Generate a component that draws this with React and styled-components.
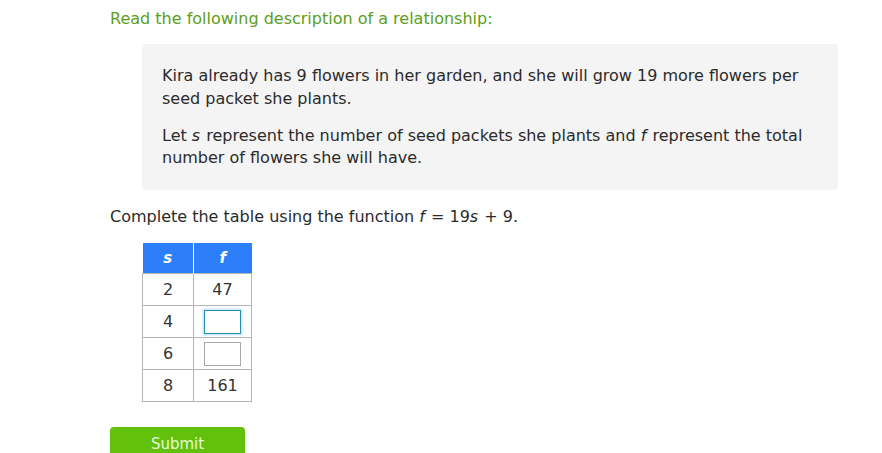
import React from "react";
import styled, { createGlobalStyle } from "styled-components";

const Global = createGlobalStyle`
  html, body { margin: 0; padding: 0; background: #fff; }
  body { font-family: "DejaVu Sans", Verdana, sans-serif; color: #333; }
`;

const Page = styled.div`
  padding: 7px 0 0 110px;
  width: 882px;
  height: 453px;
  box-sizing: border-box;
  overflow: hidden;
`;

const Heading = styled.div`
  font-size: 16px;
  line-height: 23px;
  color: #5b9e1c;
`;

const DescBox = styled.div`
  margin: 14px 0 0 32px;
  width: 696px;
  box-sizing: border-box;
  background: #f4f4f4;
  border-radius: 4px;
  padding: 21px 20px 20px 20px;
`;

const Para = styled.p`
  margin: 0;
  font-size: 16px;
  line-height: 22.5px;
  color: #2b2b2b;
  & + & { margin-top: 14.5px; }
`;

const Var = styled.i`
  padding-right: 1px;
`;

const Prompt = styled.div`
  margin-top: 15px;
  font-size: 16px;
  line-height: 23px;
  color: #2b2b2b;
`;

const Table = styled.table`
  margin: 15px 0 0 32px;
  border-collapse: collapse;
  font-size: 16px;
  color: #333;
`;

const Th = styled.th`
  background: #2d7ff9;
  color: #fff;
  font-style: italic;
  font-weight: bold;
  font-size: 15px;
  height: 31px;
  width: ${(p) => p.$w}px;
  padding: 0;
  box-sizing: border-box;
  text-align: center;
  border-left: ${(p) => (p.$divider ? "1px solid #fff" : "none")};
`;

const Td = styled.td`
  height: 32px;
  padding: 0;
  text-align: center;
  border: 1px solid #b5b5b5;
  box-sizing: border-box;
`;

const AnswerInput = styled.input`
  display: block;
  margin: 0 auto;
  width: 37px;
  height: 24px;
  box-sizing: border-box;
  border: 1px solid ${(p) => (p.$focused ? "#2d8fb0" : "#a8a8a8")};
  box-shadow: ${(p) => (p.$focused ? "0 0 2px 1px rgba(120,200,255,0.6)" : "none")};
  background: #fff;
  outline: none;
  font: inherit;
`;

const SubmitButton = styled.button`
  display: block;
  margin-top: 25px;
  width: 135px;
  height: 34px;
  border: none;
  border-radius: 4px;
  background: #62c10c;
  color: #e9f7dc;
  font-family: "DejaVu Sans", Verdana, sans-serif;
  font-size: 15px;
  padding: 0;
  line-height: 33px;
  text-align: center;
  cursor: pointer;
`;

const rows = [
  { s: 2, f: "47" },
  { s: 4, input: true, focused: true },
  { s: 6, input: true },
  { s: 8, f: "161" },
];

export default function App() {
  return (
    <Page>
      <Global />
      <Heading>Read the following description of a relationship:</Heading>
      <DescBox>
        <Para>
          Kira already has 9 flowers in her garden, and she will grow 19 more flowers per seed packet she plants.
        </Para>
        <Para>
          Let <Var>s</Var> represent the number of seed packets she plants and <Var>f</Var> represent the total number of flowers she will have.
        </Para>
      </DescBox>
      <Prompt>
        Complete the table using the function <Var>f</Var> = 19<Var>s</Var> + 9.
      </Prompt>
      <Table>
        <thead>
          <tr>
            <Th $w={51}>s</Th>
            <Th $w={58} $divider>f</Th>
          </tr>
        </thead>
        <tbody>
          {rows.map((r) => (
            <tr key={r.s}>
              <Td>{r.s}</Td>
              <Td>{r.input ? <AnswerInput $focused={r.focused} /> : r.f}</Td>
            </tr>
          ))}
        </tbody>
      </Table>
      <SubmitButton>Submit</SubmitButton>
    </Page>
  );
}
